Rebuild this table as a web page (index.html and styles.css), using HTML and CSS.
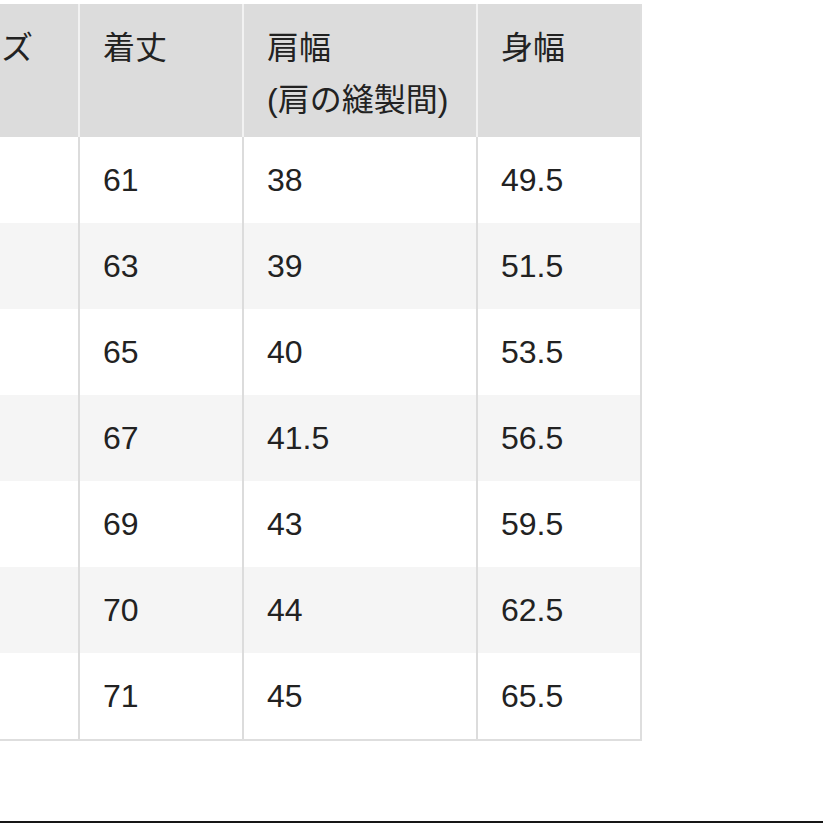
FILE: index.html
```html
<!DOCTYPE html>
<html lang="ja">
<head>
<meta charset="utf-8">
<link rel="stylesheet" href="styles.css">
</head>
<body>
<div class="page">
  <table class="size-table">
    <colgroup>
      <col class="c-size">
      <col class="c-len">
      <col class="c-shoulder">
      <col class="c-body">
    </colgroup>
    <thead>
      <tr>
        <th>サイズ</th>
        <th>着丈</th>
        <th>肩幅<br>(肩の縫製間)</th>
        <th>身幅</th>
      </tr>
    </thead>
    <tbody>
      <tr><td></td><td>61</td><td>38</td><td>49.5</td></tr>
      <tr><td></td><td>63</td><td>39</td><td>51.5</td></tr>
      <tr><td></td><td>65</td><td>40</td><td>53.5</td></tr>
      <tr><td></td><td>67</td><td>41.5</td><td>56.5</td></tr>
      <tr><td></td><td>69</td><td>43</td><td>59.5</td></tr>
      <tr><td></td><td>70</td><td>44</td><td>62.5</td></tr>
      <tr><td></td><td>71</td><td>45</td><td>65.5</td></tr>
    </tbody>
  </table>
  <div class="bottom-rule"></div>
</div>
</body>
</html>
```

FILE: styles.css
```css
html, body {
  margin: 0;
  padding: 0;
  background: #ffffff;
  overflow: hidden;
}

.page {
  width: 823px;
  height: 823px;
  padding-top: 4px;
  box-sizing: border-box;
  font-family: "Liberation Sans", "Noto Sans CJK JP", sans-serif;
  color: #222222;
}

.size-table {
  margin-left: -85px;
  border-collapse: separate;
  border-spacing: 0;
  table-layout: fixed;
  width: 727px;
  border-right: 2px solid #dedede;
  border-bottom: 2px solid #dedede;
}

.c-size { width: 165px; }
.c-len { width: 164px; }
.c-shoulder { width: 234px; }
.c-body { width: 162px; }

.size-table th,
.size-table td {
  box-sizing: border-box;
  padding: 0 0 0 23px;
  font-size: 32px;
  font-weight: normal;
  text-align: left;
  white-space: nowrap;
}

.size-table th {
  height: 133px;
  vertical-align: top;
  padding-top: 18px;
  line-height: 52px;
  background: #dcdcdc;
  border-right: 2px solid #f2f2f2;
}

.size-table th:last-child,
.size-table td:last-child {
  border-right: none;
}

.size-table td {
  height: 86px;
  vertical-align: middle;
  line-height: 40px;
  border-right: 2px solid #dcdcdc;
  background: #ffffff;
}

.size-table tbody tr:nth-child(even) td {
  background: #f5f5f5;
}

.bottom-rule {
  margin-top: 80px;
  height: 2px;
  background: #161616;
}
```
